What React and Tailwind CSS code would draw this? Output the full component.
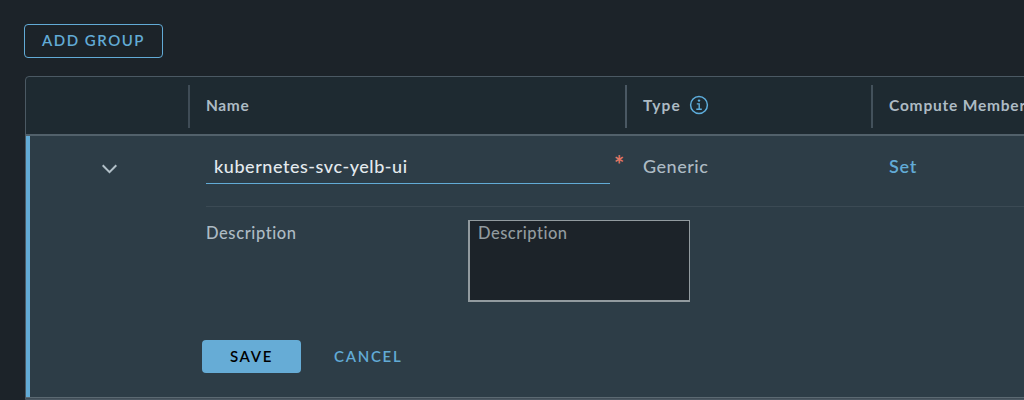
function HeaderCell({ className, children }) {
  return (
    <div className={`flex h-[43px] shrink-0 items-center border-l-2 pl-4 text-[15.5px] leading-5 font-bold whitespace-nowrap text-[#adbbc4] ${className}`}>
      {children}
    </div>
  );
}

function InfoIcon() {
  return (
    <svg className="mt-px ml-[8px] size-5 shrink-0" viewBox="0 0 20 20" fill="none" stroke="#5eaedd">
      <circle cx="10" cy="10" r="8.4" strokeWidth="1.5" />
      <circle cx="10" cy="5.6" r="1.2" fill="#5eaedd" stroke="none" />
      <path d="M7.8 8.9h2.4v5.4M7.3 14.3h5.5" strokeWidth="1.4" />
    </svg>
  );
}

export default function App() {
  return (
    <div className="h-[400px] w-[1024px] overflow-hidden bg-[#1c2329] pt-6 pl-6 font-['Lato',sans-serif] font-medium text-[#adbbc4]">
      <button className="flex h-[34px] w-[139px] items-center rounded-[4px] border border-[#62abd6] pb-[2px] pl-[17px] text-[15px] leading-5 font-semibold tracking-[1.5px] whitespace-nowrap text-[#62abd6]">
        ADD GROUP
      </button>

      <div className="mt-[18px] ml-px h-[324px] w-[1010px] rounded-tl-[4px] border border-[#4b5963] bg-[#1e2a31]">
        <div className="flex h-[59px] items-start border-b-2 border-[#52616b] pt-2">
          <div className="w-[162px] shrink-0" />
          <HeaderCell className="w-[437px] border-[#3f4c56] pb-1 tracking-[0.6px]">Name</HeaderCell>
          <HeaderCell className="w-[246px] border-[#4a5863] pb-1 tracking-[1.2px]">
            Type
            <InfoIcon />
          </HeaderCell>
          <HeaderCell className="w-[180px] border-[#43515b] pb-1 tracking-[0.8px]">Compute Members</HeaderCell>
        </div>

        <div className="h-[261px] border-l-4 border-[#62abd6] bg-[#2d3d47]">
          <div className="flex h-[70px]">
            <div className="w-[176px] shrink-0 pt-[28px] pl-[72px]">
              <svg className="h-[10px] w-[15px]" viewBox="0 0 15 10" fill="none" stroke="#b2c0c8" strokeWidth="2">
                <path d="M.7 1.3 7.5 8.2l6.8-6.9" />
              </svg>
            </div>
            <div className="h-[48px] w-[404px] shrink-0 border-b border-[#62abd6] pt-[18px] pl-2 text-[18px] leading-6 tracking-[0.54px] text-[#e4eaee]">
              kubernetes-svc-yelb-ui
            </div>
            <div className="w-[33px] shrink-0 pt-[17px] pl-1 text-[24px] leading-6 font-bold text-[#e27664]">*</div>
            <div className="w-[246px] shrink-0 pt-[18px] text-[18px] leading-6 tracking-[0.5px]">Generic</div>
            <div className="pt-[18px] text-[18px] leading-6 font-semibold tracking-[0.8px] text-[#62abd6]">Set</div>
          </div>

          <div className="ml-[176px] flex h-[98px] border-t border-[#3b4a54]">
            <div className="w-[262px] shrink-0 pt-[14px] text-[16.5px] leading-6 tracking-[0.6px]">Description</div>
            <div className="mt-[13px] h-[82px] w-[222px] shrink-0 border border-b-2 border-l-2 border-[#929b9f] bg-[#1c2329] pl-2 text-[16.5px] leading-6 tracking-[0.5px] text-[#929b9f]">
              Description
            </div>
          </div>

          <div className="mt-[36px] flex pl-[172px] text-[15px] leading-5 font-semibold">
            <button className="flex h-[33px] w-[99px] items-center justify-center rounded-[4px] bg-[#66acd6] pb-[2px] tracking-[1.7px] text-black">
              SAVE
            </button>
            <button className="ml-[33px] h-[33px] pb-[2px] tracking-[1.7px] text-[#62abd6]">CANCEL</button>
          </div>
        </div>
        <div className="h-[2px] border-t border-[#5b6972] bg-[#404d57]" />
      </div>
    </div>
  );
}
